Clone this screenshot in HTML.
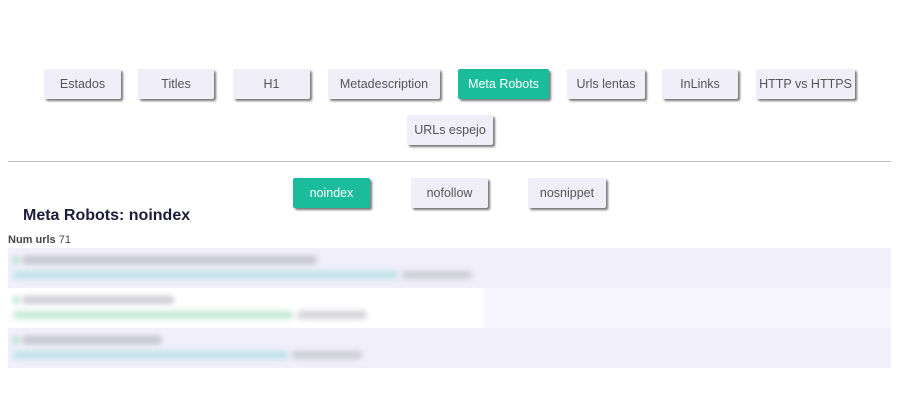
<!DOCTYPE html>
<html><head><meta charset="utf-8"><style>
body{margin:0;width:900px;height:400px;background:#fff;font-family:"Liberation Sans",sans-serif;position:relative;overflow:hidden}
.b{position:absolute;height:30px;line-height:30px;text-align:center;background:#efeef9;color:#555;font-size:12.5px;border-radius:2px;box-shadow:2px 2px 2px #777}
.a{background:#1abc9c;color:#fff}
.hr{position:absolute;left:8px;top:161px;width:883px;height:1px;background:#bbb}
h1{position:absolute;left:23px;top:207px;margin:0;font-size:16px;color:#1d1d3a;font-weight:bold}
.n{position:absolute;left:8px;top:234px;font-size:11px;color:#444}
.r{position:absolute;left:8px;width:883px;height:40px}
.bl{position:absolute;height:8px;border-radius:3px;filter:blur(3px);opacity:.8}
</style></head><body>
<div class="b" style="left:44px;top:69px;width:77px">Estados</div>
<div class="b" style="left:138px;top:69px;width:76px">Titles</div>
<div class="b" style="left:233px;top:69px;width:77px">H1</div>
<div class="b" style="left:328px;top:69px;width:112px">Metadescription</div>
<div class="b a" style="left:458px;top:69px;width:91px">Meta Robots</div>
<div class="b" style="left:567px;top:69px;width:78px">Urls lentas</div>
<div class="b" style="left:662px;top:69px;width:76px">InLinks</div>
<div class="b" style="left:756px;top:69px;width:99px">HTTP vs HTTPS</div>
<div class="b" style="left:407px;top:115px;width:86px">URLs espejo</div>
<div class="hr"></div>
<div class="b a" style="left:293px;top:178px;width:77px">noindex</div>
<div class="b" style="left:411px;top:178px;width:77px">nofollow</div>
<div class="b" style="left:528px;top:178px;width:78px">nosnippet</div>
<h1>Meta Robots: noindex</h1>
<div class="n"><b>Num urls</b> 71</div>
<div class="r" style="top:248px;background:#f0effb"></div>
<div class="r" style="top:288px;background:linear-gradient(90deg,#fff 0,#fff 470px,#f6f5fd 480px)"></div>
<div class="r" style="top:328px;background:#f0effb"></div>
<div class="bl" style="left:13px;top:256px;width:6px;background:#9ed8b8"></div>
<div class="bl" style="left:22px;top:256px;width:295px;background:#b9b9c4"></div>
<div class="bl" style="left:13px;top:271px;width:385px;background:#b0dfe2"></div>
<div class="bl" style="left:402px;top:271px;width:70px;background:#c4c4cc"></div>
<div class="bl" style="left:13px;top:296px;width:6px;background:#9ed8b8"></div>
<div class="bl" style="left:22px;top:296px;width:152px;background:#c0c0c8"></div>
<div class="bl" style="left:13px;top:311px;width:280px;background:#b7e4c8"></div>
<div class="bl" style="left:297px;top:311px;width:70px;background:#c8c8cf"></div>
<div class="bl" style="left:13px;top:336px;width:6px;background:#9ed8b8"></div>
<div class="bl" style="left:22px;top:336px;width:140px;background:#b9b9c4"></div>
<div class="bl" style="left:13px;top:351px;width:275px;background:#b0dfe2"></div>
<div class="bl" style="left:292px;top:351px;width:70px;background:#c4c4cc"></div>
</body></html>
